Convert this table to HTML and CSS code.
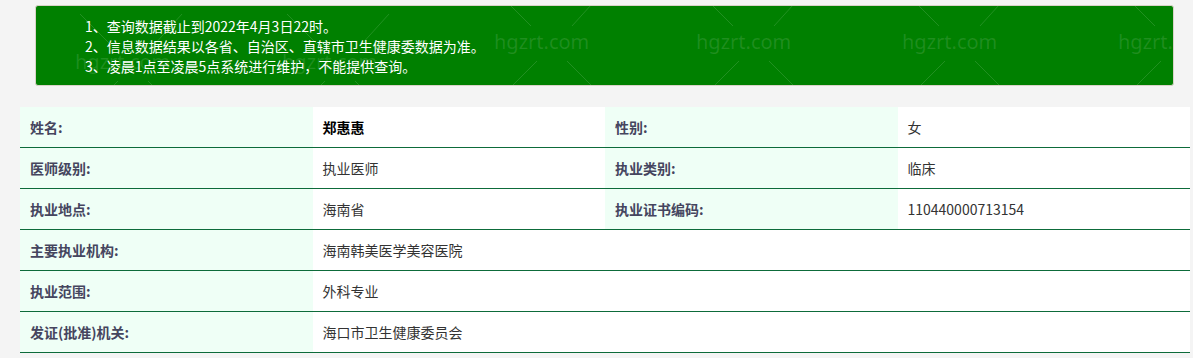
FILE: index.html
```html
<!DOCTYPE html>
<html lang="zh-CN">
<head>
<meta charset="utf-8">
<title>医师查询</title>
<link rel="stylesheet" href="styles.css">
</head>
<body>
<div class="notice">
  <div class="wm wm-a"><svg class="wm-lines" viewBox="0 0 140 120" width="140" height="120"><line x1="25" y1="0" x2="57" y2="32"/><line x1="127" y1="0" x2="98" y2="32"/><line x1="63" y1="67" x2="10" y2="120"/><line x1="93" y1="67" x2="146" y2="120"/></svg><span class="wm-text">hgzrt.com</span></div>
  <div class="wm wm-b"><svg class="wm-lines" viewBox="0 0 140 120" width="140" height="120"><line x1="25" y1="0" x2="57" y2="32"/><line x1="127" y1="0" x2="98" y2="32"/><line x1="63" y1="67" x2="10" y2="120"/><line x1="93" y1="67" x2="146" y2="120"/></svg><span class="wm-text">hgzrt.com</span></div>
  <div class="wm wm-c"><svg class="wm-lines" viewBox="0 0 140 120" width="140" height="120"><line x1="25" y1="0" x2="57" y2="32"/><line x1="127" y1="0" x2="98" y2="32"/><line x1="63" y1="67" x2="10" y2="120"/><line x1="93" y1="67" x2="146" y2="120"/></svg><span class="wm-text">hgzrt.com</span></div>
  <div class="wm wm-d"><svg class="wm-lines" viewBox="0 0 140 120" width="140" height="120"><line x1="25" y1="0" x2="57" y2="32"/><line x1="127" y1="0" x2="98" y2="32"/><line x1="63" y1="67" x2="10" y2="120"/><line x1="93" y1="67" x2="146" y2="120"/></svg><span class="wm-text">hgzrt.com</span></div>
  <div class="wm wm-e"><svg class="wm-lines" viewBox="0 0 140 120" width="140" height="120"><line x1="25" y1="0" x2="57" y2="32"/><line x1="127" y1="0" x2="98" y2="32"/><line x1="63" y1="67" x2="10" y2="120"/><line x1="93" y1="67" x2="146" y2="120"/></svg><span class="wm-text">hgzrt.com</span></div>
  <div class="wm wm-f"><svg class="wm-lines" viewBox="0 0 140 120" width="140" height="120"><line x1="25" y1="0" x2="57" y2="32"/><line x1="127" y1="0" x2="98" y2="32"/><line x1="63" y1="67" x2="10" y2="120"/><line x1="93" y1="67" x2="146" y2="120"/></svg><span class="wm-text">hgzrt.com</span></div>
  <p class="notice-line">1、查询数据截止到2022年4月3日22时。</p>
  <p class="notice-line">2、信息数据结果以各省、自治区、直辖市卫生健康委数据为准。</p>
  <p class="notice-line">3、凌晨1点至凌晨5点系统进行维护，不能提供查询。</p>
</div>

<table class="info">
  <tr>
    <td class="label">姓名:</td>
    <td class="value name">郑惠惠</td>
    <td class="label">性别:</td>
    <td class="value">女</td>
  </tr>
  <tr>
    <td class="label">医师级别:</td>
    <td class="value">执业医师</td>
    <td class="label">执业类别:</td>
    <td class="value">临床</td>
  </tr>
  <tr>
    <td class="label">执业地点:</td>
    <td class="value">海南省</td>
    <td class="label">执业证书编码:</td>
    <td class="value">110440000713154</td>
  </tr>
  <tr>
    <td class="label">主要执业机构:</td>
    <td class="value" colspan="3">海南韩美医学美容医院</td>
  </tr>
  <tr>
    <td class="label">执业范围:</td>
    <td class="value" colspan="3">外科专业</td>
  </tr>
  <tr>
    <td class="label">发证(批准)机关:</td>
    <td class="value" colspan="3">海口市卫生健康委员会</td>
  </tr>
</table>
</body>
</html>
```

FILE: styles.css
```css
html, body {
  margin: 0;
  padding: 0;
  background: #f4f4f4;
  font-family: "Noto Sans CJK SC", "Noto Sans", sans-serif;
}

.notice {
  position: relative;
  overflow: hidden;
  box-sizing: border-box;
  width: 1139px;
  height: 81px;
  margin: 5px 0 0 35px;
  padding: 10px 0 0 49px;
  background: #008000;
  border: 1px solid #d9d3c8;
  border-radius: 3px;
}

.notice-line {
  position: relative;
  margin: 0;
  color: #ffffff;
  font-size: 14px;
  line-height: 20px;
  white-space: nowrap;
}

.wm {
  position: absolute;
  width: 140px;
  height: 120px;
}

.wm-lines {
  position: absolute;
  left: 0;
  top: 0;
  stroke: rgba(255, 255, 255, 0.13);
  stroke-width: 1;
}

.wm-text {
  position: absolute;
  left: 20px;
  top: 36px;
  font-family: "Noto Sans", "Open Sans", sans-serif;
  font-size: 20px;
  line-height: 24px;
  color: rgba(255, 255, 255, 0.12);
  white-space: nowrap;
}

.wm-a { left: 438px; top: -12px; }
.wm-b { left: 640px; top: -12px; }
.wm-c { left: 846px; top: -12px; }
.wm-d { left: 1062px; top: -12px; }
.wm-e { left: 19px; top: 8px; }
.wm-f { left: 226px; top: 8px; }

.info {
  border-collapse: collapse;
  table-layout: fixed;
  width: 1170px;
  margin: 21px 0 0 20px;
  background: #ffffff;
}

.info td {
  height: 40px;
  padding: 0 0 0 10px;
  border-bottom: 1px solid #0d6b3a;
  font-size: 14px;
  line-height: 20px;
  vertical-align: middle;
  white-space: nowrap;
}

.info .label {
  background: #effff6;
  color: #45455e;
  font-weight: bold;
}

.info .value {
  background: #ffffff;
  color: #333333;
}

.info .name {
  color: #000000;
  font-weight: bold;
}
```
